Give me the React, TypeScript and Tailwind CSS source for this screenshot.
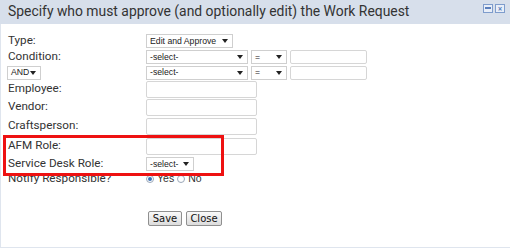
import React from 'react';

const labelFont = { fontFamily: 'Roboto, "Liberation Sans", sans-serif' };

function Caret() {
  return (
    <svg width="6" height="4" viewBox="0 0 6 4" className="shrink-0">
      <path d="M0 0h6L3 4z" fill="#222" />
    </svg>
  );
}

function Select({ text, width }: { text: string; width: string }) {
  return (
    <div
      className={`${width} shrink-0 h-[14px] flex items-center justify-between border border-[#cfcfcf] bg-white pl-[3px] pr-[4px] text-[8.7px] text-[#222] whitespace-nowrap font-['Liberation_Sans',sans-serif]`}
    >
      <span className="leading-none">{text}</span>
      <Caret />
    </div>
  );
}

function TextBox({ width }: { width: string }) {
  return <div className={`${width} shrink-0 border border-[#d6d6d6] rounded-[2px] bg-white`} />;
}

function Row({ label, height, children }: { label?: React.ReactNode; height: string; children?: React.ReactNode }) {
  return (
    <div className={`flex items-center ${height}`}>
      <div className="w-[138px] shrink-0 text-[11.7px] text-[#333] whitespace-nowrap" style={labelFont}>
        {label}
      </div>
      <div className="flex items-center gap-[3px]">{children}</div>
    </div>
  );
}

function Radio({ checked }: { checked?: boolean }) {
  return (
    <span className="w-[8px] h-[8px] rounded-full border border-[#9aa7b8] bg-white flex items-center justify-center">
      {checked && <span className="w-[4px] h-[4px] rounded-full bg-[#3a6fb4]" />}
    </span>
  );
}

export default function App() {
  return (
    <div className="w-[510px] h-[248px] bg-white overflow-hidden">
      <div className="h-[24px] bg-[#d7dfeb] flex items-center justify-between pl-[8px] pr-[5px]">
        <span className="text-[13.9px] text-[#333] leading-none whitespace-nowrap" style={labelFont}>
          Specify who must approve (and optionally edit) the Work Request
        </span>
        <div className="flex gap-[2px] self-start mt-[4px]">
          <span className="w-[10px] h-[9px] border border-[#7e9ccc] bg-[#e8eef8] flex items-start justify-center pt-[2px]">
            <span className="w-[6px] h-[2px] bg-[#5b7fbc]" />
          </span>
          <span className="w-[10px] h-[9px] border border-[#7e9ccc] bg-[#e8eef8] flex items-center justify-center text-[8px] leading-none text-[#5b7fbc] font-bold">
            ×
          </span>
        </div>
      </div>
      <div className="h-[224px] border-l border-b border-[#dfe5ee] pl-[7px] pt-[9px] relative">
        <Row label="Type:" height="h-[16px]">
          <Select text="Edit and Approve" width="w-[87px]" />
        </Row>
        <Row label="Condition:" height="h-[16px]">
          <Select text="-select-" width="w-[102px]" />
          <Select text="=" width="w-[36px]" />
          <TextBox width="w-[77px] h-[14px]" />
        </Row>
        <Row
          label={
            <div className="w-[34px] ml-[-1px]">
              <Select text="AND" width="w-[34px]" />
            </div>
          }
          height="h-[15px]"
        >
          <Select text="-select-" width="w-[102px]" />
          <Select text="=" width="w-[36px]" />
          <TextBox width="w-[77px] h-[14px]" />
        </Row>
        <Row label="Employee:" height="h-[18px]">
          <TextBox width="w-[111px] h-[17px]" />
        </Row>
        <Row label="Vendor:" height="h-[18px]">
          <TextBox width="w-[111px] h-[17px]" />
        </Row>
        <Row label="Craftsperson:" height="h-[18px] mt-[1px]">
          <TextBox width="w-[111px] h-[17px]" />
        </Row>
        <Row label="AFM Role:" height="h-[18px] mt-[2px]">
          <TextBox width="w-[111px] h-[17px]" />
        </Row>
        <Row label="Service Desk Role:" height="h-[18px]">
          <Select text="-select-" width="w-[48px]" />
        </Row>
        <Row label="Notify Responsible?" height="h-[12px]">
          <div className="flex items-center gap-[3px] text-[10.5px] text-[#333] font-['Liberation_Sans',sans-serif]">
            <Radio checked />
            <span>Yes</span>
            <Radio />
            <span>No</span>
          </div>
        </Row>
        <div className="flex gap-[4px] ml-[140px] mt-[26px]">
          <button className="w-[34px] h-[15px] border border-[#8f8f8f] rounded-[2px] bg-gradient-to-b from-[#fafafa] to-[#dcdcdc] text-[10px] leading-none text-[#111] font-['DejaVu_Sans',sans-serif]">
            Save
          </button>
          <button className="w-[36px] h-[15px] border border-[#8f8f8f] rounded-[2px] bg-gradient-to-b from-[#fafafa] to-[#dcdcdc] text-[10px] leading-none text-[#111] font-['DejaVu_Sans',sans-serif]">
            Close
          </button>
        </div>
        <div className="absolute left-[2px] top-[111px] w-[221px] h-[41px] border-[3px] border-[#ee1111] pointer-events-none" />
      </div>
    </div>
  );
}
